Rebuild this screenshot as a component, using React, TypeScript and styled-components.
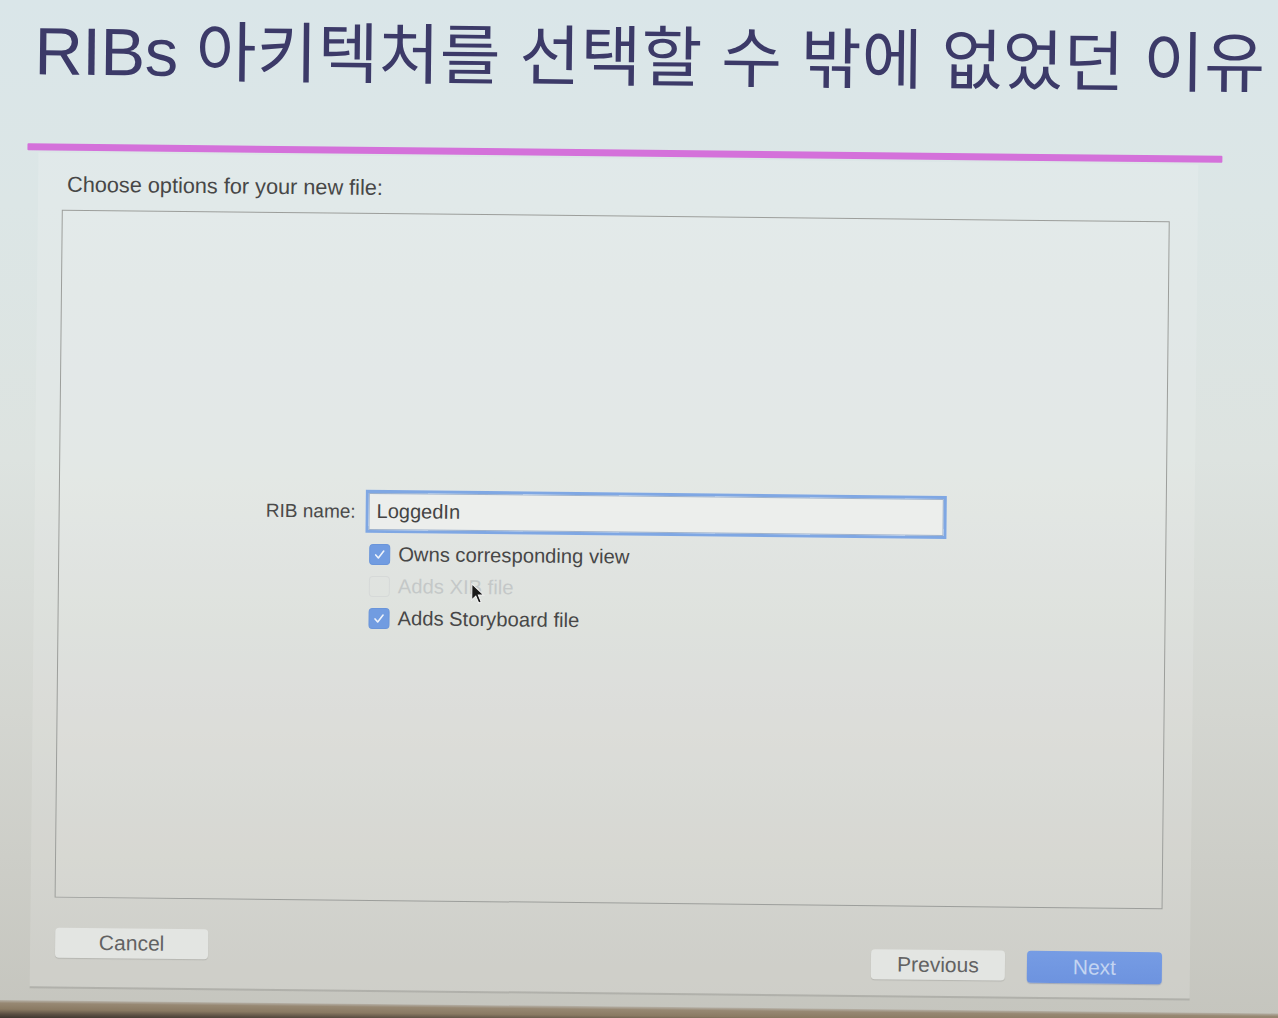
import React from "react";
import styled, { createGlobalStyle } from "styled-components";

const GlobalStyle = createGlobalStyle`
  html, body { margin: 0; padding: 0; background: #d9e4e6; }
  body { font-family: "Liberation Sans", Arial, "Noto Sans CJK KR", sans-serif; }
  * { box-sizing: border-box; }
`;

const Viewport = styled.div`
  width: 1278px;
  height: 1018px;
  overflow: hidden;
  background: linear-gradient(180deg, #dae6e9 0%, #dce6e6 20%, #dde3e0 45%, #d4d6d1 70%, #c5c5be 100%);
`;

const Slide = styled.div`
  width: 1300px;
  height: 1060px;
  display: flex;
  flex-direction: column;
  transform: rotate(0.6deg);
  transform-origin: 0 0;
`;

const Title = styled.h1`
  margin: 0;
  padding: 11px 0 0 35px;
  height: 114px;
  font-family: "Liberation Sans", Arial, "Noto Sans CJK KR", sans-serif;
  font-weight: 400;
  font-size: 66px;
  line-height: 80px;
  letter-spacing: 0.3px;
  word-spacing: 0;
  color: #3c3a68;
  white-space: nowrap;
`;

const Latin = styled.span`
  font-size: 67px;
  letter-spacing: -0.5px;
  word-spacing: 0;
`;

const Divider = styled.div`
  margin: 29px 0 0 29px;
  width: 1195px;
  height: 7px;
  background: #d471da;
  border-radius: 1px;
`;

const Dialog = styled.section`
  margin: 2px 0 0 40px;
  width: 1160px;
  height: 836px;
  padding: 20px 28px 0 24px;
  display: flex;
  flex-direction: column;
  background: rgba(255, 255, 255, 0.14);
  border-bottom: 2px solid rgba(120, 120, 115, 0.35);
`;

const Prompt = styled.div`
  padding-left: 5px;
  font-size: 21.7px;
  line-height: 24px;
  color: #474747;
`;

const OptionsBox = styled.div`
  margin-top: 13px;
  width: 1108px;
  height: 688px;
  border: 1.5px solid #9c9e9b;
  background: rgba(255, 255, 255, 0.08);
  padding-top: 276px;
`;

const FormGrid = styled.div`
  display: grid;
  grid-template-columns: 296px 581px;
  column-gap: 10px;
  row-gap: 5px;
`;

const Label = styled.label`
  align-self: center;
  text-align: right;
  font-size: 19px;
  color: #4a4a4a;
`;

const Field = styled.div`
  height: 43px;
  border: 3px solid #7fa7e3;
  box-shadow: inset 0 0 0 1px #9fb2cc;
  background: #eceeec;
  padding-left: 8px;
  display: flex;
  align-items: center;
  font-size: 20px;
  color: #444;
`;

const CheckList = styled.div`
  grid-column: 2;
  position: relative;
  display: flex;
  flex-direction: column;
  padding-left: 4px;
`;

const CheckRow = styled.div<{ $disabled?: boolean }>`
  height: 32px;
  display: flex;
  align-items: center;
  gap: 8px;
  font-size: 20.2px;
  color: ${(p) => (p.$disabled ? "#c4c8c8" : "#474747")};
`;

const Box = styled.span<{ $checked?: boolean }>`
  width: 21px;
  height: 21px;
  border-radius: 4px;
  display: inline-flex;
  align-items: center;
  justify-content: center;
  background: ${(p) => (p.$checked ? "#719ce1" : "transparent")};
  border: 1px solid ${(p) => (p.$checked ? "#6a95da" : "#d6d9d8")};
`;

const Cursor = styled.svg`
  position: absolute;
  left: 106px;
  top: 44px;
  width: 14px;
  height: 22px;
`;

const Footer = styled.div`
  margin-top: 30px;
  display: flex;
  justify-content: space-between;
  align-items: flex-start;
  padding-left: 1px;
`;

const RightGroup = styled.div`
  display: flex;
  gap: 22px;
  padding-top: 13px;
`;

const Button = styled.button<{ $primary?: boolean; $w: number }>`
  width: ${(p) => p.$w}px;
  height: ${(p) => (p.$primary ? 32 : 30)}px;
  border: none;
  border-radius: 4px;
  font-family: "Liberation Sans", Arial, sans-serif;
  font-size: 21px;
  background: ${(p) => (p.$primary ? "linear-gradient(180deg, #769ce4, #6d93df)" : "#e3e5e2")};
  color: ${(p) => (p.$primary ? "#c3d4f1" : "#626262")};
  box-shadow: ${(p) => (p.$primary ? "0 1px 1px rgba(60,80,140,0.3)" : "0 1px 1px rgba(0,0,0,0.12)")};
  padding: 0;
`;

const BottomBand = styled.div`
  margin-top: 12px;
  height: 60px;
  background: linear-gradient(180deg, #b5b0a6 0px, #978873 3px, #8a7a63 9px, #5a4e42 14px, #2e2925 20px, #2a2624 100%);
`;

const Check = () => (
  <svg width="13" height="13" viewBox="0 0 13 13">
    <polyline points="2.5,7 5.2,10 10.5,3" fill="none" stroke="#eef3fb" strokeWidth="1.6" strokeLinecap="round" strokeLinejoin="round" />
  </svg>
);

export default function App() {
  return (
    <>
      <GlobalStyle />
      <Viewport>
        <Slide>
          <Title>
            <Latin>RIBs </Latin>아키텍처를 선택할 수 밖에 없었던 이유
          </Title>
          <Divider />
          <Dialog>
            <Prompt>Choose options for your new file:</Prompt>
            <OptionsBox>
              <FormGrid>
                <Label>RIB name:</Label>
                <Field>LoggedIn</Field>
                <CheckList>
                  <CheckRow>
                    <Box $checked>
                      <Check />
                    </Box>
                    Owns corresponding view
                  </CheckRow>
                  <CheckRow $disabled>
                    <Box />
                    Adds XIB file
                  </CheckRow>
                  <CheckRow>
                    <Box $checked>
                      <Check />
                    </Box>
                    Adds Storyboard file
                  </CheckRow>
                  <Cursor viewBox="0 0 14 22">
                    <path d="M1 1 L1 17 L5 13 L8 20 L10.5 19 L7.5 12 L13 12 Z" fill="#1a1a1a" stroke="#f2f2f2" strokeWidth="1" />
                  </Cursor>
                </CheckList>
              </FormGrid>
            </OptionsBox>
            <Footer>
              <Button $w={153}>Cancel</Button>
              <RightGroup>
                <Button $w={134}>Previous</Button>
                <Button $primary $w={135}>Next</Button>
              </RightGroup>
            </Footer>
          </Dialog>
          <BottomBand />
        </Slide>
      </Viewport>
    </>
  );
}
